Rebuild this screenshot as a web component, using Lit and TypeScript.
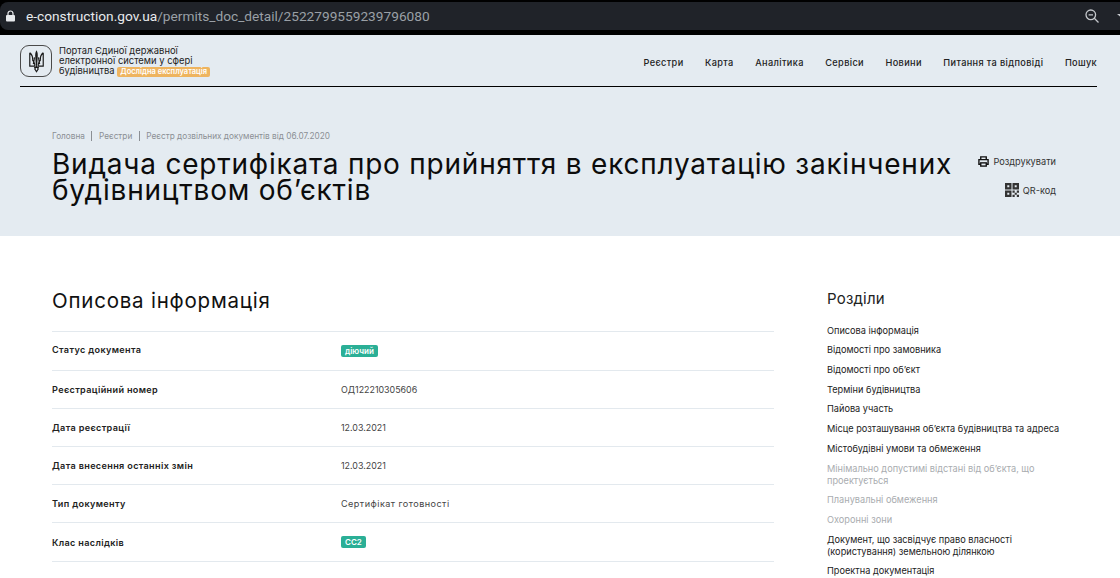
import { LitElement, html, css, svg } from "lit";
import { customElement } from "lit/decorators.js";

const rows: [string, string, string?][] = [
  ["Статус документа", "діючий", "badge"],
  ["Реєстраційний номер", "ОД122210305606", "num"],
  ["Дата реєстрації", "12.03.2021", "num"],
  ["Дата внесення останніх змін", "12.03.2021", "num"],
  ["Тип документу", "Сертифікат готовності", "text"],
  ["Клас наслідків", "СС2", "badge"],
];

const toc: [string, boolean?][] = [
  ["Описова інформація"],
  ["Відомості про замовника"],
  ["Відомості про об’єкт"],
  ["Терміни будівництва"],
  ["Пайова участь"],
  ["Місце розташування об’єкта будівництва та адреса"],
  ["Містобудівні умови та обмеження"],
  ["Мінімально допустимі відстані від об’єкта, що проектується", true],
  ["Планувальні обмеження", true],
  ["Охоронні зони", true],
  ["Документ, що засвідчує право власності (користування) земельною ділянкою"],
  ["Проектна документація"],
];

const nav = ["Реєстри", "Карта", "Аналітика", "Сервіси", "Новини", "Питання та відповіді", "Пошук"];

const trident = svg`
  <path d="M12 1.500c1.500 2.500 1.900 5 1.500 9L12.800 21h-1.600l-.7-10.500c-.4-4 0-6.500 1.500-9z" fill="#1a1a1a"/>
  <path d="M3.500 4.500V21.500H9.800V19.500C9.800 16.500 7.500 15.500 7 13.500M3.500 4.500C6.500 7 7.500 10 7 13.500M20.500 4.500V21.500H14.200V19.500C14.200 16.500 16.500 15.500 17 13.500M20.500 4.500C17.500 7 16.500 10 17 13.500M8 19c1-4 .9-6 1.500-8.500M16 19c-1-4-.9-6-1.500-8.500" fill="none" stroke="#1a1a1a" stroke-width="1.500"/>
  <path d="M9 23h6M12 21.500l2.200 3.500L12 28.500 9.800 25z" fill="none" stroke="#1a1a1a" stroke-width="1.400"/>`;

@customElement("app-root")
export class AppRoot extends LitElement {
  static styles = css`
    :host { display: block; height: 578px; overflow: hidden; background: #fff; font-family: "Inter", "Liberation Sans", sans-serif; color: #1a1a1a; }
    .chrome { height: 35px; background: #000; padding-top: 2px; box-sizing: border-box; }
    .bar { height: 28px; background: #202329; border-radius: 8px 0 0 8px; display: flex; align-items: center; padding-left: 6px; font-family: "Roboto", sans-serif; font-size: 13.700px; overflow: hidden; }
    .bar .host { color: #e8eaed; margin-left: 11px; }
    .bar .path { color: #9aa0a6; }
    .bar .zoom { margin-left: auto; margin-right: 18px; }
    .hero { background: #e4ebf1; height: 201px; padding: 0 23px 0 20px; box-sizing: border-box; }
    header { height: 51px; display: flex; align-items: center; border-bottom: 1px solid #000; }
    .logo { width: 32px; height: 32px; box-sizing: border-box; border: 1px solid #4a4a4a; border-radius: 9px; display: flex; align-items: center; justify-content: center; margin-right: 7px; flex: none; }
    .brand { font-size: 9.400px; line-height: 10px; color: #222; padding-top: 2px; }
    .tag { display: inline-block; background: #eeb45f; color: #fff; font-size: 7.500px; line-height: 10px; padding: 0 3px; border-radius: 2px; font-weight: 600; }
    nav { margin-left: auto; display: flex; gap: 21.500px; font-size: 9.200px; font-weight: 500; color: #222; letter-spacing: .36px; padding-top: 3px; }
    .hero-main { display: flex; padding: 0 41px 0 32px; margin-top: 43px; }
    .crumbs { font-size: 8.250px; color: #8b8f94; display: flex; align-items: center; height: 11px; }
    .crumbs i { width: 1px; height: 10px; background: #8b8f94; margin: 0 6.500px; }
    h1 { margin: 10px 0 0; font-size: 28px; line-height: 26px; font-weight: 400; color: #0c0c0c; letter-spacing: .78px; width: 910px; }
    .actions { margin-left: auto; margin-top: 23px; display: flex; flex-direction: column; align-items: flex-end; gap: 13px; font-size: 9.200px; color: #333; }
    .act { display: flex; align-items: center; gap: 4px; height: 16px; }
    .content { display: flex; padding: 0 0 0 52px; }
    .main { width: 722px; }
    h2 { margin: 53px 0 18px; font-size: 20.500px; line-height: 24px; font-weight: 400; color: #111; letter-spacing: .78px; }
    .row { display: flex; align-items: center; border-top: 1px solid #e3e9ee; font-size: 9.100px; box-sizing: border-box; height: 38px; }
    .row.tall { height: 39px; }
    .row.first .k { margin-bottom: 3px; }
    .row .k { width: 289px; font-weight: 600; color: #222; letter-spacing: .35px; }
    .row .v { color: #444; }
    .row .v.text { letter-spacing: .45px; }
    .row .v.num { font-size: 8.900px; }
    .badge { display: inline-block; background: #2baf96; color: #fff; font-weight: 600; font-size: 8px; line-height: 12px; padding: 0 4px; border-radius: 2px; }
    .side { margin-left: 53px; width: 240px; padding-top: 54px; }
    h3 { margin: 0 0 17.500px; font-size: 15px; line-height: 17px; font-weight: 400; color: #222; letter-spacing: .2px; }
    .toc a { display: block; font-size: 9.200px; line-height: 12px; color: #222; margin-bottom: 7.720px; }
    .toc a.off { color: #a9acaf; }
  `;

  render() {
    return html`
      <div class="chrome">
        <div class="bar">
          <svg width="9" height="12" viewBox="0 0 9 12"><path d="M2 5V3.500a2.500 2.500 0 0 1 5 0V5" stroke="#e8eaed" stroke-width="1.200" fill="none"/><rect x="0" y="5" width="9" height="6.500" rx="1" fill="#e8eaed"/></svg>
          <span class="host">e-construction.gov.ua</span><span class="path">/permits_doc_detail/2522799559239796080</span>
          <svg class="zoom" width="14" height="14" viewBox="0 0 14 14" fill="none" stroke="#c4c7cb" stroke-width="1.300"><circle cx="5.800" cy="5.800" r="4.800"/><path d="M9.300 9.300L13.500 13.500M3.600 5.800h4.400"/></svg>
          <svg width="3" height="16" viewBox="0 0 3 16"><path d="M0 6H3V8.500z" fill="#c4c7cb"/></svg>
        </div>
      </div>
      <section class="hero">
        <header>
          <div class="logo"><svg width="19" height="24" viewBox="0 0 24 30">${trident}</svg></div>
          <div class="brand">Портал Єдиної державної<br>електронної системи у сфері<br>будівництва <span class="tag">Дослідна експлуатація</span></div>
          <nav>${nav.map((n) => html`<span>${n}</span>`)}</nav>
        </header>
        <div class="hero-main">
          <div>
            <div class="crumbs"><span>Головна</span><i></i><span>Реєстри</span><i></i><span>Реєстр дозвільних документів від 06.07.2020</span></div>
            <h1>Видача сертифіката про прийняття в експлуатацію закінчених будівництвом об’єктів</h1>
          </div>
          <div class="actions">
            <div class="act">
              <svg width="11" height="11" viewBox="0 0 12 12" fill="none" stroke="#111" stroke-width="1.500"><path d="M3 3.500V1h6v2.500M3 9H1V4h10v5H9"/><rect x="3" y="7.500" width="6" height="3.500"/></svg>
              <span>Роздрукувати</span>
            </div>
            <div class="act">
              <svg width="14" height="14" viewBox="0 0 14 14" fill="#333"><path fill-rule="evenodd" d="M0 0h6.500v6.500H0zM2.300 2.300v2h2v-2zM7.500 0H14v6.500H7.500zM9.700 2.300v2h2v-2zM0 7.500h6.500V14H0zM2.300 9.700v2h2v-2z"/><path d="M7.500 7.500h2.200v2.200H7.500zM11.800 7.500H14v2.200h-2.200zM9.700 9.700h2.100v2.100H9.700zM7.500 11.800h2.200V14H7.500zM11.800 11.800H14V14h-2.200z"/></svg>
              <span>QR-код</span>
            </div>
          </div>
        </div>
      </section>
      <div class="content">
        <div class="main">
          <h2>Описова інформація</h2>
          ${rows.map(([k, v, b], i) => html`<div class="row ${i === 0 ? "tall first" : i === 5 ? "tall" : ""}"><div class="k">${k}</div><div class="v ${b === "badge" ? "" : b}">${b === "badge" ? html`<span class="badge">${v}</span>` : v}</div></div>`)}
          <div class="row"></div>
        </div>
        <aside class="side">
          <h3>Розділи</h3>
          <div class="toc">${toc.map(([t, off]) => html`<a class=${off ? "off" : ""}>${t}</a>`)}</div>
        </aside>
      </div>
    `;
  }
}
